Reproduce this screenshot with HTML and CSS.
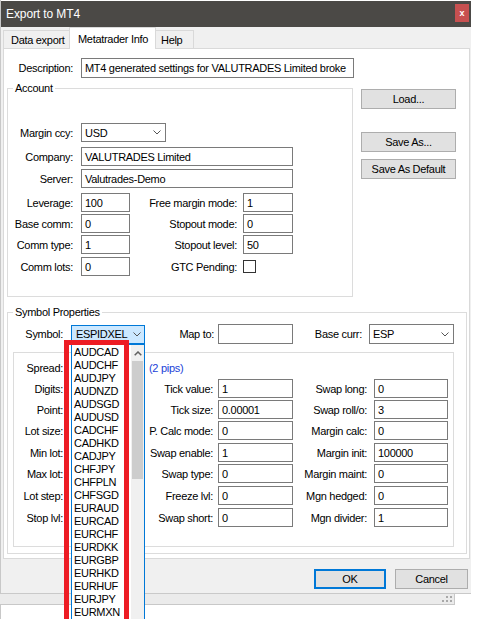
FILE: index.html
```html
<!DOCTYPE html>
<html>
<head>
<meta charset="utf-8">
<title>Export to MT4</title>
<link rel="stylesheet" href="styles.css">
</head>
<body>
<div class="desk">
  <div class="dialog">
    <div class="titlebar">
      <span class="title">Export to MT4</span>
      <span class="close">x</span>
    </div>
    <div class="tabs">
      <div class="tab t-data">Data export</div>
      <div class="tab t-meta active">Metatrader Info</div>
      <div class="tab t-help">Help</div>
    </div>
    <div class="panel">
      <div class="desc-row">
        <span class="lbl l-desc">Description:</span>
        <div class="field f-desc">MT4 generated settings for VALUTRADES Limited broke</div>
      </div>

      <div class="acc-row">
        <div class="group account">
          <span class="legend">Account</span>
          <div class="acc-rows">
            <div class="row">
              <span class="lbl a1">Margin ccy:</span>
              <div class="field select s-ccy"><span>USD</span><svg class="chev" width="8" height="5" viewBox="0 0 8 5"><path d="M0.5 0.5 L4 4 L7.5 0.5" fill="none" stroke="#555" stroke-width="1"/></svg></div>
            </div>
            <div class="row">
              <span class="lbl a1">Company:</span>
              <div class="field f-wide">VALUTRADES Limited</div>
            </div>
            <div class="row">
              <span class="lbl a1">Server:</span>
              <div class="field f-wide">Valutrades-Demo</div>
            </div>
            <div class="row">
              <span class="lbl a1">Leverage:</span>
              <div class="field f-small">100</div>
              <span class="lbl a2">Free margin mode:</span>
              <div class="field f-small2">1</div>
            </div>
            <div class="row">
              <span class="lbl a1">Base comm:</span>
              <div class="field f-small">0</div>
              <span class="lbl a2">Stopout mode:</span>
              <div class="field f-small2">0</div>
            </div>
            <div class="row">
              <span class="lbl a1">Comm type:</span>
              <div class="field f-small">1</div>
              <span class="lbl a2">Stopout level:</span>
              <div class="field f-small2">50</div>
            </div>
            <div class="row">
              <span class="lbl a1">Comm lots:</span>
              <div class="field f-small">0</div>
              <span class="lbl a2">GTC Pending:</span>
              <div class="checkbox"></div>
            </div>
          </div>
        </div>
        <div class="side">
          <div class="btn b-load">Load...</div>
          <div class="btn b-save">Save As...</div>
          <div class="btn b-def">Save As Default</div>
        </div>
      </div>

      <div class="group symbol">
        <span class="legend">Symbol Properties</span>
        <div class="sym-row">
          <span class="lbl y1">Symbol:</span>
          <div class="field select s-sym"><span>ESPIDXEL</span><svg class="chev" width="8" height="5" viewBox="0 0 8 5"><path d="M0.5 0.5 L4 4 L7.5 0.5" fill="none" stroke="#555" stroke-width="1"/></svg></div>
          <span class="lbl y2">Map to:</span>
          <div class="field f-map"></div>
          <span class="lbl y3">Base curr:</span>
          <div class="field select s-base"><span>ESP</span><svg class="chev" width="8" height="5" viewBox="0 0 8 5"><path d="M0.5 0.5 L4 4 L7.5 0.5" fill="none" stroke="#555" stroke-width="1"/></svg></div>
        </div>
        <div class="inner">
          <div class="spread-row">
            <span class="lbl c1">Spread:</span>
            <div class="field fc1"></div>
            <span class="pips">(2 pips)</span>
          </div>
          <div class="srows">
            <div class="srow">
              <span class="lbl c1">Digits:</span><div class="field fc1"></div>
              <span class="lbl c2">Tick value:</span><div class="field fc2">1</div>
              <span class="lbl c3">Swap long:</span><div class="field fc3">0</div>
            </div>
            <div class="srow">
              <span class="lbl c1">Point:</span><div class="field fc1"></div>
              <span class="lbl c2">Tick size:</span><div class="field fc2">0.00001</div>
              <span class="lbl c3">Swap roll/o:</span><div class="field fc3">3</div>
            </div>
            <div class="srow">
              <span class="lbl c1">Lot size:</span><div class="field fc1"></div>
              <span class="lbl c2">P. Calc mode:</span><div class="field fc2">0</div>
              <span class="lbl c3">Margin calc:</span><div class="field fc3">0</div>
            </div>
            <div class="srow">
              <span class="lbl c1">Min lot:</span><div class="field fc1"></div>
              <span class="lbl c2">Swap enable:</span><div class="field fc2">1</div>
              <span class="lbl c3">Margin init:</span><div class="field fc3">100000</div>
            </div>
            <div class="srow">
              <span class="lbl c1">Max lot:</span><div class="field fc1"></div>
              <span class="lbl c2">Swap type:</span><div class="field fc2">0</div>
              <span class="lbl c3">Margin maint:</span><div class="field fc3">0</div>
            </div>
            <div class="srow">
              <span class="lbl c1">Lot step:</span><div class="field fc1"></div>
              <span class="lbl c2">Freeze lvl:</span><div class="field fc2">0</div>
              <span class="lbl c3">Mgn hedged:</span><div class="field fc3">0</div>
            </div>
            <div class="srow">
              <span class="lbl c1">Stop lvl:</span><div class="field fc1"></div>
              <span class="lbl c2">Swap short:</span><div class="field fc2">0</div>
              <span class="lbl c3">Mgn divider:</span><div class="field fc3">1</div>
            </div>
          </div>
        </div>
      </div>
    </div>
    <div class="footer">
      <div class="btn ok">OK</div>
      <div class="btn cancel">Cancel</div>
    </div>
  </div>
  <div class="behind">
    <svg class="grip" width="11" height="7" viewBox="0 0 11 7"><rect x="9" y="0" width="2" height="2" fill="#a8a8a8"/><rect x="5" y="4" width="2" height="2" fill="#a8a8a8"/><rect x="9" y="4" width="2" height="2" fill="#a8a8a8"/><rect x="1" y="4" width="2" height="2" fill="#a8a8a8"/><rect x="5" y="0" width="2" height="2" fill="#a8a8a8"/></svg>
  </div>

  <div class="dropdown">
    <div class="items">
      <div class="item">AUDCAD</div>
      <div class="item">AUDCHF</div>
      <div class="item">AUDJPY</div>
      <div class="item">AUDNZD</div>
      <div class="item">AUDSGD</div>
      <div class="item">AUDUSD</div>
      <div class="item">CADCHF</div>
      <div class="item">CADHKD</div>
      <div class="item">CADJPY</div>
      <div class="item">CHFJPY</div>
      <div class="item">CHFPLN</div>
      <div class="item">CHFSGD</div>
      <div class="item">EURAUD</div>
      <div class="item">EURCAD</div>
      <div class="item">EURCHF</div>
      <div class="item">EURDKK</div>
      <div class="item">EURGBP</div>
      <div class="item">EURHKD</div>
      <div class="item">EURHUF</div>
      <div class="item">EURJPY</div>
      <div class="item">EURMXN</div>
    </div>
    <div class="scrollbar">
      <div class="sb-up"><svg width="8" height="5" viewBox="0 0 8 5"><path d="M0.7 4.3 L4 1 L7.3 4.3" fill="none" stroke="#606060" stroke-width="1.5"/></svg></div>
      <div class="sb-thumb"></div>
    </div>
  </div>
  <div class="redmark"></div>
</div>
</body>
</html>
```

FILE: styles.css
```css
* { box-sizing: border-box; margin: 0; padding: 0; }
html, body { width: 477px; height: 619px; overflow: hidden; }
body {
  background: #fff;
  font-family: "Liberation Sans", Arial, sans-serif;
  font-size: 11px;
  letter-spacing: -0.3px;
  color: #000;
}
.desk {
  position: relative;
  width: 477px;
  height: 619px;
  overflow: hidden;
  padding-top: 1px;
  background: linear-gradient(to right, #c8c8c8 0, #c8c8c8 1px, #fff 1px);
}
.dialog {
  margin-left: 1px;
  width: 470px;
  background: #f0f0f0;
  border-bottom: 1px solid #c9c9c9;
}
.titlebar {
  height: 26px;
  background: #4b4946;
  color: #fff;
  display: flex;
  justify-content: space-between;
  align-items: center;
  padding-left: 5px;
  padding-right: 2px;
}
.title { font-size: 12px; letter-spacing: -0.1px; }
.close {
  align-self: flex-start;
  margin-top: 3px;
  width: 14px;
  height: 18px;
  background: #c75050;
  color: #fff;
  font-size: 9px;
  font-weight: bold;
  letter-spacing: 0;
  display: flex;
  align-items: center;
  justify-content: center;
}
.tabs {
  height: 21px;
  display: flex;
  align-items: flex-end;
  padding-left: 2px;
  position: relative;
  z-index: 2;
}
.tab {
  height: 18px;
  border: 1px solid #d9d9d9;
  border-bottom: none;
  background: #f0f0f0;
  display: flex;
  align-items: center;
  white-space: nowrap;
}
.t-data { width: 66px; padding-left: 7px; border-right: none; }
.t-meta { width: 87px; padding-left: 8px; }
.t-help { width: 38px; padding-left: 5px; border-left: none; }
.tab.active {
  height: 22px;
  margin-bottom: -1px;
  background: #fff;
}
.panel {
  margin-left: 2px;
  width: 467px;
  height: 511px;
  border: 1px solid #d9d9d9;
  background: #fff;
  padding-top: 9px;
  position: relative;
}
.lbl { text-align: right; white-space: nowrap; }
.desc-row { display: flex; align-items: center; height: 20px; }
.l-desc { width: 69px; margin-right: 8px; }
.field {
  border: 1px solid #7a7a7a;
  background: #fff;
  height: 19px;
  padding-left: 3px;
  display: flex;
  align-items: center;
  white-space: nowrap;
  overflow: hidden;
}
.f-desc { width: 273px; height: 20px; }
.select { justify-content: space-between; padding-right: 4px; }
.chev { flex: none; }

.acc-row { display: flex; margin-top: 10px; margin-left: 3px; }
.group { border: 1px solid #dcdcdc; position: relative; }
.legend {
  position: absolute;
  top: -7px;
  left: 5px;
  padding: 0 2px;
  background: #fff;
  line-height: 13px;
}
.account { width: 346px; height: 209px; padding-top: 34px; }
.acc-rows { display: grid; grid-template-rows: 24px 22px 24px 21px 21px 22px 19px; }
.row { display: flex; align-items: center; height: 19px; }
.a1 { width: 65px; margin-right: 8px; }
.a2 { width: 107px; margin-right: 6px; }
.s-ccy { width: 85px; }
.f-wide { width: 212px; }
.f-small { width: 49px; }
.f-small2 { width: 50px; }
.checkbox { width: 13px; height: 13px; border: 1px solid #333; background: #fff; }

.side { margin-left: 8px; width: 95px; display: flex; flex-direction: column; padding-top: 1px; }
.btn {
  height: 20px;
  background: #e1e1e1;
  border: 1px solid #adadad;
  display: flex;
  align-items: center;
  justify-content: center;
  white-space: nowrap;
}
.b-save { margin-top: 23px; }
.b-def { margin-top: 7px; }

.symbol {
  margin-top: 15px;
  margin-left: 3px;
  width: 460px;
  height: 242px;
  padding-top: 11px;
}
.sym-row { display: flex; align-items: center; height: 20px; }
.y1 { width: 55px; margin-right: 8px; }
.s-sym {
  width: 74px;
  background: #cce8ff;
  border-color: #0078d7;
  padding-left: 4px;
  padding-right: 3px;
}
.y2 { width: 69px; margin-right: 4px; }
.f-map { width: 75px; height: 20px; }
.y3 { width: 69px; margin-right: 7px; }
.s-base { width: 85px; height: 20px; }

.inner {
  margin-top: 8px;
  margin-left: 5px;
  width: 441px;
  height: 195px;
  border: 1px solid #dcdcdc;
  padding-top: 5px;
}
.spread-row { display: flex; align-items: center; height: 19px; }
.pips { margin-left: 4px; color: #1c3fd8; }
.srows { margin-top: 2px; display: grid; grid-template-rows: 21px 21px 22px 21px 22px 22px 19px; }
.srow { display: flex; align-items: center; height: 19px; }
.c1 { width: 49px; margin-right: 8px; }
.fc1 { width: 74px; }
.c2 { width: 68px; margin-right: 5px; }
.fc2 { width: 75px; }
.c3 { width: 74px; margin-right: 7px; }
.fc3 { width: 74px; }

.footer {
  height: 34px;
  display: flex;
  justify-content: flex-end;
  gap: 9px;
  padding-top: 10px;
  padding-right: 3px;
}
.ok { width: 72px; border: 2px solid #0078d7; }
.cancel { width: 73px; }

.behind {
  width: 455px;
  height: 11px;
  background: #ebebeb;
  border-right: 1px solid #c8c8c8;
  border-bottom: 1px solid #c8c8c8;
  display: flex;
  justify-content: flex-end;
  align-items: flex-start;
  padding-top: 2px;
  padding-right: 2px;
}

.dropdown {
  position: absolute;
  left: 71px;
  top: 344px;
  width: 74px;
  height: 290px;
  border: 1px solid #0078d7;
  background: #fff;
  display: flex;
}
.items { flex: 1; padding-top: 1px; padding-left: 2px; }
.item { height: 13px; line-height: 13px; white-space: nowrap; }
.scrollbar { width: 13px; background: #f0f0f0; display: flex; flex-direction: column; }
.sb-up { height: 16px; display: flex; align-items: center; justify-content: center; }
.sb-thumb { height: 118px; margin: 0 1px; background: #cdcdcd; }

.redmark {
  position: absolute;
  left: 64px;
  top: 340px;
  width: 65px;
  height: 290px;
  border: 5px solid #ed1c24;
}
```
